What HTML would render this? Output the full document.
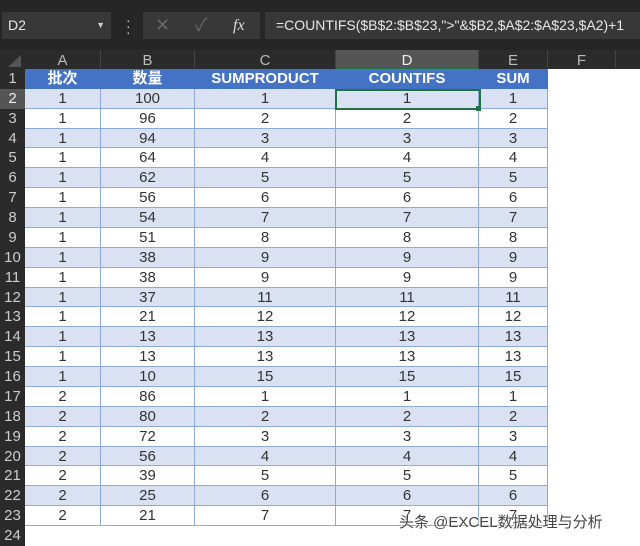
<!DOCTYPE html><html><head><meta charset="utf-8"><style>
body{margin:0;width:640px;height:544px;overflow:hidden;background:#fff;font-family:"Liberation Sans","Noto Sans CJK SC",sans-serif;position:relative}
.a{position:absolute}
.top{left:0;top:0;width:640px;height:50px;background:#262626}
.box{background:#383838;color:#e8e8e8;font-size:14px}
.ch{top:50px;height:19px;background:#2b2b2b;border-right:1px solid #444;color:#bbb;font-size:15px;text-align:center;line-height:21px}
.rh{left:0;width:25px;background:#2b2b2b;color:#ccc;font-size:15px;text-align:center;box-sizing:border-box}
.c{font-size:15px;color:#333;text-align:center;box-sizing:border-box;border-right:1px solid #8ea9db;border-bottom:1px solid #8ea9db}
</style></head><body>
<div class="a top"></div>
<div class="a box" style="left:2px;top:12px;width:109px;height:27px;line-height:27px;padding-left:6px;box-sizing:border-box">D2<span style="position:absolute;right:6px;font-size:9px;color:#ccc">▼</span></div>
<div class="a" style="left:126px;top:17px;color:#ccc;font-size:14px;line-height:6px">·<br>·<br>·</div>
<div class="a box" style="left:143px;top:12px;width:117px;height:27px;color:#666;font-size:18px;line-height:27px"><span style="position:absolute;left:12px">✕</span><span style="position:absolute;left:52px">✓</span><span style="position:absolute;left:90px;color:#ddd;font-family:'Liberation Serif',serif;font-style:italic;font-size:16px">fx</span></div>
<div class="a box" style="left:265px;top:12px;width:375px;height:27px;line-height:27px;padding-left:11px;box-sizing:border-box">=COUNTIFS($B$2:$B$23,"&gt;"&amp;$B2,$A$2:$A$23,$A2)+1</div>
<div class="a" style="left:0;top:50px;width:25px;height:19px;background:#2b2b2b"></div>
<div class="a" style="left:8px;top:55px;width:0;height:0;border-left:13px solid transparent;border-bottom:12px solid #555"></div>
<div id="g"></div>
<div class="a" style="left:399px;top:511px;font-size:15px;color:#444;text-shadow:0 0 2px #fff,0 0 2px #fff">头条 @EXCEL数据处理与分析</div>
<script>
var cols=[[25,101,'A'],[101,195,'B'],[195,336,'C'],[336,479,'D'],[479,548,'E'],[548,616,'F'],[616,660,'']];
var h='';
cols.forEach(function(c){h+='<div class="a ch" style="left:'+c[0]+'px;width:'+(c[1]-c[0]-1)+'px;'+(c[2]=='D'?'background:#555;color:#eee;border-bottom:2px solid #217346;height:17px':'')+'">'+c[2]+'</div>';});
var d=[['批次','数量','SUMPRODUCT','COUNTIFS','SUM'],[1,100,1,1,1],[1,96,2,2,2],[1,94,3,3,3],[1,64,4,4,4],[1,62,5,5,5],[1,56,6,6,6],[1,54,7,7,7],[1,51,8,8,8],[1,38,9,9,9],[1,38,9,9,9],[1,37,11,11,11],[1,21,12,12,12],[1,13,13,13,13],[1,13,13,13,13],[1,10,15,15,15],[2,86,1,1,1],[2,80,2,2,2],[2,72,3,3,3],[2,56,4,4,4],[2,39,5,5,5],[2,25,6,6,6],[2,21,7,7,7]];
var rh=19.87;
for(var r=0;r<24;r++){var y=69+r*rh;
h+='<div class="a rh" style="top:'+y+'px;height:'+rh+'px;line-height:'+rh+'px;'+(r==1?'background:#555;color:#eee':'')+'">'+(r+1)+'</div>';
if(r<23){for(var k=0;k<5;k++){var c=cols[k];var bg=r==0?'#4472c4':(r%2?'#d9e1f2':'#fff');
h+='<div class="a c" style="left:'+c[0]+'px;top:'+y+'px;width:'+(c[1]-c[0])+'px;height:'+rh+'px;line-height:'+rh+'px;background:'+bg+';'+(r==0?'color:#fff;font-weight:bold;border-color:#4472c4':'')+'">'+d[r][k]+'</div>';}}}
h+='<div class="a" style="left:335px;top:'+(69+rh)+'px;width:142px;height:17px;border:2px solid #217346"></div><div class="a" style="left:476px;top:'+(69+2*rh-3)+'px;width:5px;height:5px;background:#217346"></div>';
document.getElementById('g').innerHTML=h;
</script>
</body></html>
